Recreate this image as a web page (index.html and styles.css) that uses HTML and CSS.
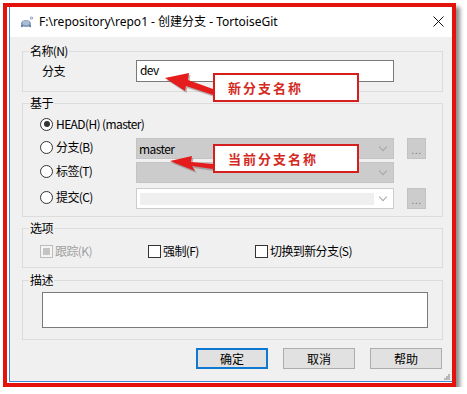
FILE: index.html
```html
<!DOCTYPE html>
<html lang="zh-CN">

<head>
    <meta charset="UTF-8">
    <title>创建分支 - TortoiseGit</title>
    <link rel="stylesheet" href="styles.css">
</head>

<body>
    <div class="frame">
        <div class="window">
            <!-- 标题栏 -->
            <div class="titlebar">
                <svg class="app-icon" width="14" height="14" viewBox="0 0 14 14">
                    <ellipse cx="6" cy="8.5" rx="5" ry="3.6" fill="#7e97b8" />
                    <ellipse cx="6" cy="7.8" rx="3.6" ry="2.4" fill="#a9bdd6" />
                    <circle cx="2" cy="11" r="1.2" fill="#6b82a3" />
                    <circle cx="10" cy="11" r="1.2" fill="#6b82a3" />
                    <circle cx="11.5" cy="3" r="1.6" fill="#8aa0bd" />
                    <circle cx="11.5" cy="3" r="0.7" fill="#e8eef6" />
                </svg>
                <span class="title">F:\repository\repo1 - 创建分支 - TortoiseGit</span>
                <svg class="close" width="11" height="11" viewBox="0 0 11 11">
                    <path d="M0.5 0.5 L10.5 10.5 M10.5 0.5 L0.5 10.5" stroke="#111" stroke-width="1" />
                </svg>
            </div>

            <div class="client">
                <!-- 名称 -->
                <fieldset class="group group-name">
                    <legend>名称(N)</legend>
                    <div class="name-row">
                        <span class="field-label">分支</span>
                        <div class="edit">dev</div>
                    </div>
                </fieldset>

                <!-- 基于 -->
                <fieldset class="group group-base">
                    <legend>基于</legend>
                    <div class="radio-row head-row">
                        <span class="radio checked"></span>
                        <span>HEAD(H) (master)</span>
                    </div>
                    <div class="base-row row-branch">
                        <div class="radio-row base-label">
                            <span class="radio"></span>
                            <span>分支(B)</span>
                        </div>
                        <div class="combo disabled">
                            <span class="combo-text">master</span>
                            <span class="chevron"></span>
                        </div>
                        <div class="dots">...</div>
                    </div>
                    <div class="base-row row-tag">
                        <div class="radio-row base-label">
                            <span class="radio"></span>
                            <span>标签(T)</span>
                        </div>
                        <div class="combo disabled">
                            <span class="combo-text"></span>
                            <span class="chevron"></span>
                        </div>
                    </div>
                    <div class="base-row row-commit">
                        <div class="radio-row base-label">
                            <span class="radio"></span>
                            <span>提交(C)</span>
                        </div>
                        <div class="combo commit">
                            <span class="combo-field"></span>
                            <span class="chevron"></span>
                        </div>
                        <div class="dots">...</div>
                    </div>
                </fieldset>

                <!-- 选项 -->
                <fieldset class="group group-options">
                    <legend>选项</legend>
                    <div class="check-row">
                        <div class="check-item off">
                            <span class="checkbox mixed"></span>
                            <span>跟踪(K)</span>
                        </div>
                        <div class="check-item">
                            <span class="checkbox"></span>
                            <span>强制(F)</span>
                        </div>
                        <div class="check-item">
                            <span class="checkbox"></span>
                            <span>切换到新分支(S)</span>
                        </div>
                    </div>
                </fieldset>

                <!-- 描述 -->
                <fieldset class="group group-desc">
                    <legend>描述</legend>
                    <div class="memo"></div>
                </fieldset>

                <div class="buttons">
                    <button class="btn default">确定</button>
                    <button class="btn">取消</button>
                    <button class="btn">帮助</button>
                </div>

                <svg class="grip" width="7" height="7" viewBox="0 0 7 7">
                    <rect x="5" y="1" width="2" height="2" fill="#b8b8b8" />
                    <rect x="3" y="3" width="2" height="2" fill="#b8b8b8" />
                    <rect x="5" y="3" width="2" height="2" fill="#b8b8b8" />
                    <rect x="1" y="5" width="2" height="2" fill="#b8b8b8" />
                    <rect x="3" y="5" width="2" height="2" fill="#b8b8b8" />
                    <rect x="5" y="5" width="2" height="2" fill="#b8b8b8" />
                </svg>
            </div>
        </div>
    </div>

    <!-- 标注箭头 -->
    <svg class="arrows" width="467" height="394" viewBox="0 0 467 394">
        <g fill="#7a6a6a" opacity="0.45" transform="translate(1.5 2)">
            <polygon points="165,78 189,73 188,80 213,89 213,95 186,86 185,91" />
            <polygon points="170,161 192,156 191,162 213,164 213,169 192,166 195,171" />
        </g>
        <g fill="#e51c1c">
            <polygon points="165,78 189,73 188,80 213,89 213,95 186,86 185,91" />
            <polygon points="170,161 192,156 191,162 213,164 213,169 192,166 195,171" />
        </g>
    </svg>
    <div class="note note-new">新分支名称</div>
    <div class="note note-current">当前分支名称</div>
</body>

</html>
```

FILE: styles.css
```css
/* 整体 */
body {
    margin: 0;
    background-color: #ffffff;
    font-family: "Noto Sans CJK SC", "Noto Sans", sans-serif;
    font-size: 12px;
    color: #000;
}

/* 红色外框 */
.frame {
    box-sizing: border-box;
    width: 453px;
    height: 384px;
    margin: 3px 0 0 3px;
    border: 4px solid #e3120b;
    background-color: #ffffff;
    box-shadow: 4px 4px 4px rgba(0, 0, 0, 0.45);
}

.window {
    box-sizing: border-box;
    height: 375px;
    margin-left: 2px;
    border-left: 1px solid #3f8ad6;
    border-bottom: 1px solid #3f8ad6;
    display: flex;
    flex-direction: column;
}

/* 标题栏 */
.titlebar {
    height: 30px;
    flex: none;
    display: flex;
    align-items: center;
    padding: 0 8px 0 10px;
    background-color: #ffffff;
}

.app-icon {
    margin-right: 5px;
    margin-top: -1px;
}

.title {
    flex: 1;
    font-family: "Noto Sans", "Noto Sans CJK SC", sans-serif;
    font-size: 12px;
    line-height: 16px;
    color: #000;
}

.close {
    margin-top: -2px;
}

/* 客户区 */
.client {
    flex: 1;
    position: relative;
    background-color: #f0f0f0;
    padding: 0 9px 0 12px;
    letter-spacing: -0.6px;
}

.group {
    margin: 0;
    padding: 0;
    min-width: 0;
    border: 1px solid #dcdcdc;
}

.group legend {
    margin-left: 6px;
    padding: 0 1px;
    line-height: 14px;
    height: 14px;
}

.group-name {
    margin-top: 7px;
    padding-bottom: 9px;
}

.group-base {
    margin-top: 4px;
    padding-bottom: 7px;
}

.group-options {
    margin-top: 4px;
    padding-bottom: 8px;
}

.group-desc {
    margin-top: 5px;
    padding-bottom: 11px;
}

/* 名称行 */
.name-row {
    display: flex;
    align-items: center;
    margin-top: 2px;
    height: 22px;
    padding-left: 19px;
}

.field-label {
    width: 94px;
    line-height: 16px;
}

.edit {
    box-sizing: border-box;
    width: 258px;
    height: 22px;
    background-color: #ffffff;
    border: 1px solid #7a7a7a;
    padding-left: 3px;
    line-height: 18px;
}

/* 单选按钮 */
.radio-row {
    display: flex;
    align-items: center;
    line-height: 16px;
}

.head-row {
    margin-top: 6px;
    height: 16px;
    padding-left: 17px;
}

.radio {
    box-sizing: border-box;
    width: 13px;
    height: 13px;
    border: 1px solid #333333;
    border-radius: 50%;
    background-color: #ffffff;
    margin-right: 3px;
    position: relative;
}

.radio.checked::after {
    content: "";
    position: absolute;
    left: 2.5px;
    top: 2.5px;
    width: 6px;
    height: 6px;
    border-radius: 50%;
    background-color: #333333;
}

.base-row {
    display: flex;
    align-items: center;
    height: 21px;
    padding-left: 17px;
}

.row-branch {
    margin-top: 6px;
}

.row-tag {
    margin-top: 3px;
}

.row-commit {
    margin-top: 5px;
}

.base-label {
    width: 96px;
    height: 21px;
    margin-top: -3px;
}

/* 下拉框 */
.combo {
    box-sizing: border-box;
    width: 258px;
    height: 21px;
    display: flex;
    align-items: center;
    position: relative;
}

.combo.disabled {
    background-color: #cccccc;
    border: 1px solid #c4c4c4;
}

.combo.commit {
    background-color: #ffffff;
    border: 1px solid #cccccc;
}

.combo-text {
    flex: 1;
    padding-left: 2px;
    line-height: 16px;
}

.combo-field {
    width: 234px;
    height: 12px;
    margin-left: 3px;
    margin-right: auto;
    background-color: #efefef;
}

.chevron {
    width: 5px;
    height: 5px;
    border-right: 1px solid #a6a6a6;
    border-bottom: 1px solid #a6a6a6;
    transform: rotate(45deg);
    margin: 0 7px 3px 0;
}

.dots {
    box-sizing: border-box;
    width: 19px;
    height: 21px;
    margin-left: 13px;
    background-color: #cccccc;
    border: 1px solid #c2c2c2;
    color: #7c7c7c;
    font-family: "Liberation Sans", sans-serif;
    font-size: 11px;
    line-height: 22px;
    text-align: center;
    letter-spacing: 0.5px;
}

/* 复选框 */
.check-row {
    display: flex;
    margin-top: 8px;
    height: 16px;
    padding-left: 17px;
}

.check-item {
    display: flex;
    align-items: center;
    line-height: 16px;
}

.check-item:nth-child(1) {
    width: 108px;
}

.check-item:nth-child(2) {
    width: 107px;
}

.checkbox {
    box-sizing: border-box;
    width: 13px;
    height: 13px;
    border: 1px solid #333333;
    background-color: #ffffff;
    margin-right: 2px;
    position: relative;
}

.check-item.off {
    color: #a0a0a0;
}

.checkbox.mixed {
    border-color: #bcbcbc;
    background-color: #f4f4f4;
}

.checkbox.mixed::after {
    content: "";
    position: absolute;
    left: 2px;
    top: 2px;
    width: 7px;
    height: 7px;
    background-color: #c4c4c4;
}

/* 描述 */
.memo {
    box-sizing: border-box;
    width: 386px;
    height: 36px;
    margin: 5px 0 0 19px;
    background-color: #ffffff;
    border: 1px solid #7a7a7a;
}

/* 底部按钮 */
.buttons {
    display: flex;
    justify-content: flex-end;
    gap: 15px;
    margin-top: 8px;
    margin-right: 1px;
}

.btn {
    box-sizing: border-box;
    width: 72px;
    height: 21px;
    padding: 0;
    background-color: #e1e1e1;
    border: 1px solid #adadad;
    font-family: "Noto Sans CJK SC", sans-serif;
    font-size: 12px;
    line-height: 16px;
    color: #000;
}

.btn.default {
    border: 2px solid #0f78d0;
}

.grip {
    position: absolute;
    right: 2px;
    bottom: 1px;
}

/* 标注 */
.arrows {
    position: absolute;
    left: 0;
    top: 0;
    pointer-events: none;
}

.note {
    position: absolute;
    box-sizing: border-box;
    left: 213px;
    width: 146px;
    height: 29px;
    border: 2px solid #d51f1f;
    background-color: #ffffff;
    color: #d42a1e;
    font-weight: bold;
    font-size: 13px;
    letter-spacing: 2px;
    line-height: 25px;
    padding-left: 13px;
}

.note-new {
    top: 73px;
}

.note-current {
    top: 144px;
}
```
